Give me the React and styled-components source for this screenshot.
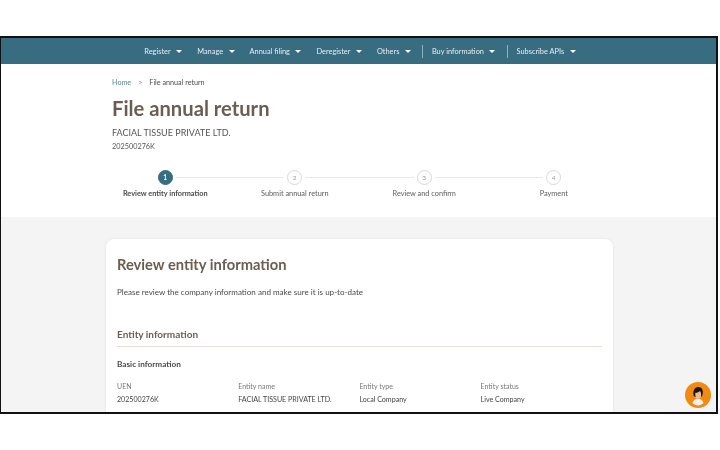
import styled, { createGlobalStyle } from "styled-components";

const GlobalStyle = createGlobalStyle`
  html, body {
    margin: 0;
    padding: 0;
    background: #fff;
    font-family: "Lato", "Open Sans", sans-serif;
  }
  * {
    box-sizing: border-box;
  }
`;

const Page = styled.div`
  width: 720px;
  height: 450px;
  padding: 36px 2px 0 0;
  background: #fff;
`;

const Frame = styled.div`
  position: relative;
  height: 378px;
  border: 2px solid #111;
  border-left-width: 1px;
  overflow: hidden;
  background: #f4f4f4;
  filter: blur(0.4px);
`;

const NavBar = styled.nav`
  height: 26px;
  padding-left: 3px;
  background: #386c80;
  display: flex;
  align-items: center;
  justify-content: center;
  color: #e6eef1;
  font-size: 7.4px;
`;

const NavItem = styled.div`
  display: flex;
  align-items: center;
  gap: 5.5px;
  margin: 0 7.5px;
  white-space: nowrap;
`;

const Caret = styled.span`
  width: 0;
  height: 0;
  border-left: 3px solid transparent;
  border-right: 3px solid transparent;
  border-top: 3px solid #fff;
`;

const NavDivider = styled.span`
  width: 1px;
  height: 13px;
  margin: 0 1px 0 4px;
  background: #8fb0bd;
`;

const Header = styled.header`
  background: #fff;
  height: 153px;
  padding: 14px 0 0 111px;
`;

const Breadcrumb = styled.div`
  display: flex;
  align-items: center;
  gap: 7px;
  font-size: 7.2px;
  line-height: 10px;
  color: #4f4f4f;
`;

const Crumb = styled.span`
  color: #5f8795;
`;

const Title = styled.h1`
  margin: 7px 0 0;
  font-size: 20.2px;
  line-height: 26px;
  font-weight: 700;
  color: #6b5d4f;
`;

const Company = styled.div`
  margin-top: 6px;
  font-size: 9px;
  line-height: 12px;
  color: #555;
`;

const Uen = styled.div`
  margin-top: 2px;
  font-size: 7.3px;
  line-height: 11px;
  color: #555;
`;

const Stepper = styled.div`
  display: grid;
  grid-template-columns: repeat(4, 129.5px);
  margin: 18px 0 0 -11.5px;
`;

const Step = styled.div`
  display: flex;
  flex-direction: column;
  align-items: center;
`;

const Track = styled.div`
  width: 100%;
  display: flex;
  align-items: center;
`;

const Line = styled.span`
  flex: 1;
  height: 1px;
  background: ${(p) => (p.$hidden ? "transparent" : "#e8e8e8")};
`;

const Circle = styled.span`
  width: 15px;
  height: 15px;
  margin: 0 3px;
  border-radius: 50%;
  display: flex;
  align-items: center;
  justify-content: center;
  font-size: 6.5px;
  font-weight: ${(p) => (p.$active ? 700 : 400)};
  color: ${(p) => (p.$active ? "#fff" : "#9a9a9a")};
  background: ${(p) => (p.$active ? "#386c80" : "#fff")};
  border: 1px solid ${(p) => (p.$active ? "#386c80" : "#d8d8d8")};
`;

const StepLabel = styled.div`
  margin-top: 4px;
  font-size: 7.35px;
  line-height: 10px;
  white-space: nowrap;
  font-weight: ${(p) => (p.$active ? 700 : 400)};
  color: ${(p) => (p.$active ? "#4a4a4a" : "#5c5c5c")};
`;

const Content = styled.main`
  padding: 22px 0 0 105px;
`;

const Card = styled.section`
  width: 507px;
  height: 200px;
  padding: 15px 11px 0;
  background: #fff;
  border-radius: 8px;
  box-shadow: 0 0 3px rgba(0, 0, 0, 0.08);
`;

const CardTitle = styled.h2`
  margin: 0;
  font-size: 14.7px;
  line-height: 20px;
  font-weight: 700;
  color: #6b5d4f;
`;

const Intro = styled.p`
  margin: 12px 0 0;
  font-size: 8.05px;
  line-height: 12px;
  color: #4a4a4a;
`;

const SectionTitle = styled.h3`
  margin: 29px 0 0;
  padding-bottom: 5px;
  font-size: 10px;
  line-height: 14px;
  font-weight: 700;
  color: #6b5d4f;
  border-bottom: 1px solid #e6e0d8;
`;

const SubTitle = styled.h4`
  margin: 11px 0 0;
  font-size: 8.2px;
  line-height: 12px;
  font-weight: 700;
  color: #4a4a4a;
`;

const FieldGrid = styled.div`
  display: grid;
  grid-template-columns: repeat(4, 121.2px);
  margin-top: 11px;
`;

const FieldLabel = styled.div`
  font-size: 7px;
  line-height: 10px;
  color: #777;
`;

const FieldValue = styled.div`
  margin-top: 4px;
  font-size: 7.1px;
  line-height: 10px;
  color: #444;
  white-space: nowrap;
`;

const ChatBubble = styled.div`
  position: absolute;
  right: 5px;
  bottom: 4px;
  width: 26px;
  height: 26px;
`;

const navItems = ["Register", "Manage", "Annual filing", "Deregister", "Others"];
const steps = ["Review entity information", "Submit annual return", "Review and confirm", "Payment"];
const fields = [
  ["UEN", "202500276K"],
  ["Entity name", "FACIAL TISSUE PRIVATE LTD."],
  ["Entity type", "Local Company"],
  ["Entity status", "Live Company"],
];

function App() {
  return (
    <Page>
      <GlobalStyle />
      <Frame>
        <NavBar>
          {navItems.map((item) => (
            <NavItem key={item}>
              {item} <Caret />
            </NavItem>
          ))}
          <NavDivider />
          <NavItem>
            Buy information <Caret />
          </NavItem>
          <NavDivider />
          <NavItem>
            Subscribe APIs <Caret />
          </NavItem>
        </NavBar>

        <Header>
          <Breadcrumb>
            <Crumb>Home</Crumb>
            <Crumb>&gt;</Crumb>
            <span>File annual return</span>
          </Breadcrumb>
          <Title>File annual return</Title>
          <Company>FACIAL TISSUE PRIVATE LTD.</Company>
          <Uen>202500276K</Uen>
          <Stepper>
            {steps.map((label, i) => (
              <Step key={label}>
                <Track>
                  <Line $hidden={i === 0} />
                  <Circle $active={i === 0}>{i + 1}</Circle>
                  <Line $hidden={i === steps.length - 1} />
                </Track>
                <StepLabel $active={i === 0}>{label}</StepLabel>
              </Step>
            ))}
          </Stepper>
        </Header>

        <Content>
          <Card>
            <CardTitle>Review entity information</CardTitle>
            <Intro>Please review the company information and make sure it is up-to-date</Intro>
            <SectionTitle>Entity information</SectionTitle>
            <SubTitle>Basic information</SubTitle>
            <FieldGrid>
              {fields.map(([label, value]) => (
                <div key={label}>
                  <FieldLabel>{label}</FieldLabel>
                  <FieldValue>{value}</FieldValue>
                </div>
              ))}
            </FieldGrid>
          </Card>
        </Content>

        <ChatBubble>
          <svg width="26" height="26" viewBox="0 0 26 26">
            <circle cx="13" cy="13" r="13" fill="#f08a12" />
            <path d="M7.500 21c.8-3 3-4.200 5.500-4.200s4.700 1.200 5.500 4.200c-1.500 1.600-3.400 2.400-5.500 2.400S9 22.600 7.500 21z" fill="#f4efe8" />
            <ellipse cx="13" cy="12.500" rx="3.600" ry="4.400" fill="#e9bb98" />
            <path d="M8.500 13c-.8-4.600 1.600-8 4.800-8 3.400 0 5.200 3 4.300 7.200-.3 1.500-1 2.500-1.700 3 .5-2.200.4-4.400-.8-6.200-1.500 1.300-3.200 1.800-4.700 1.800-.3 1.400-.2 3 .3 4.400C9.400 14.800 8.800 14 8.500 13z" fill="#1c1511" />
          </svg>
        </ChatBubble>
      </Frame>
    </Page>
  );
}

export default App;
